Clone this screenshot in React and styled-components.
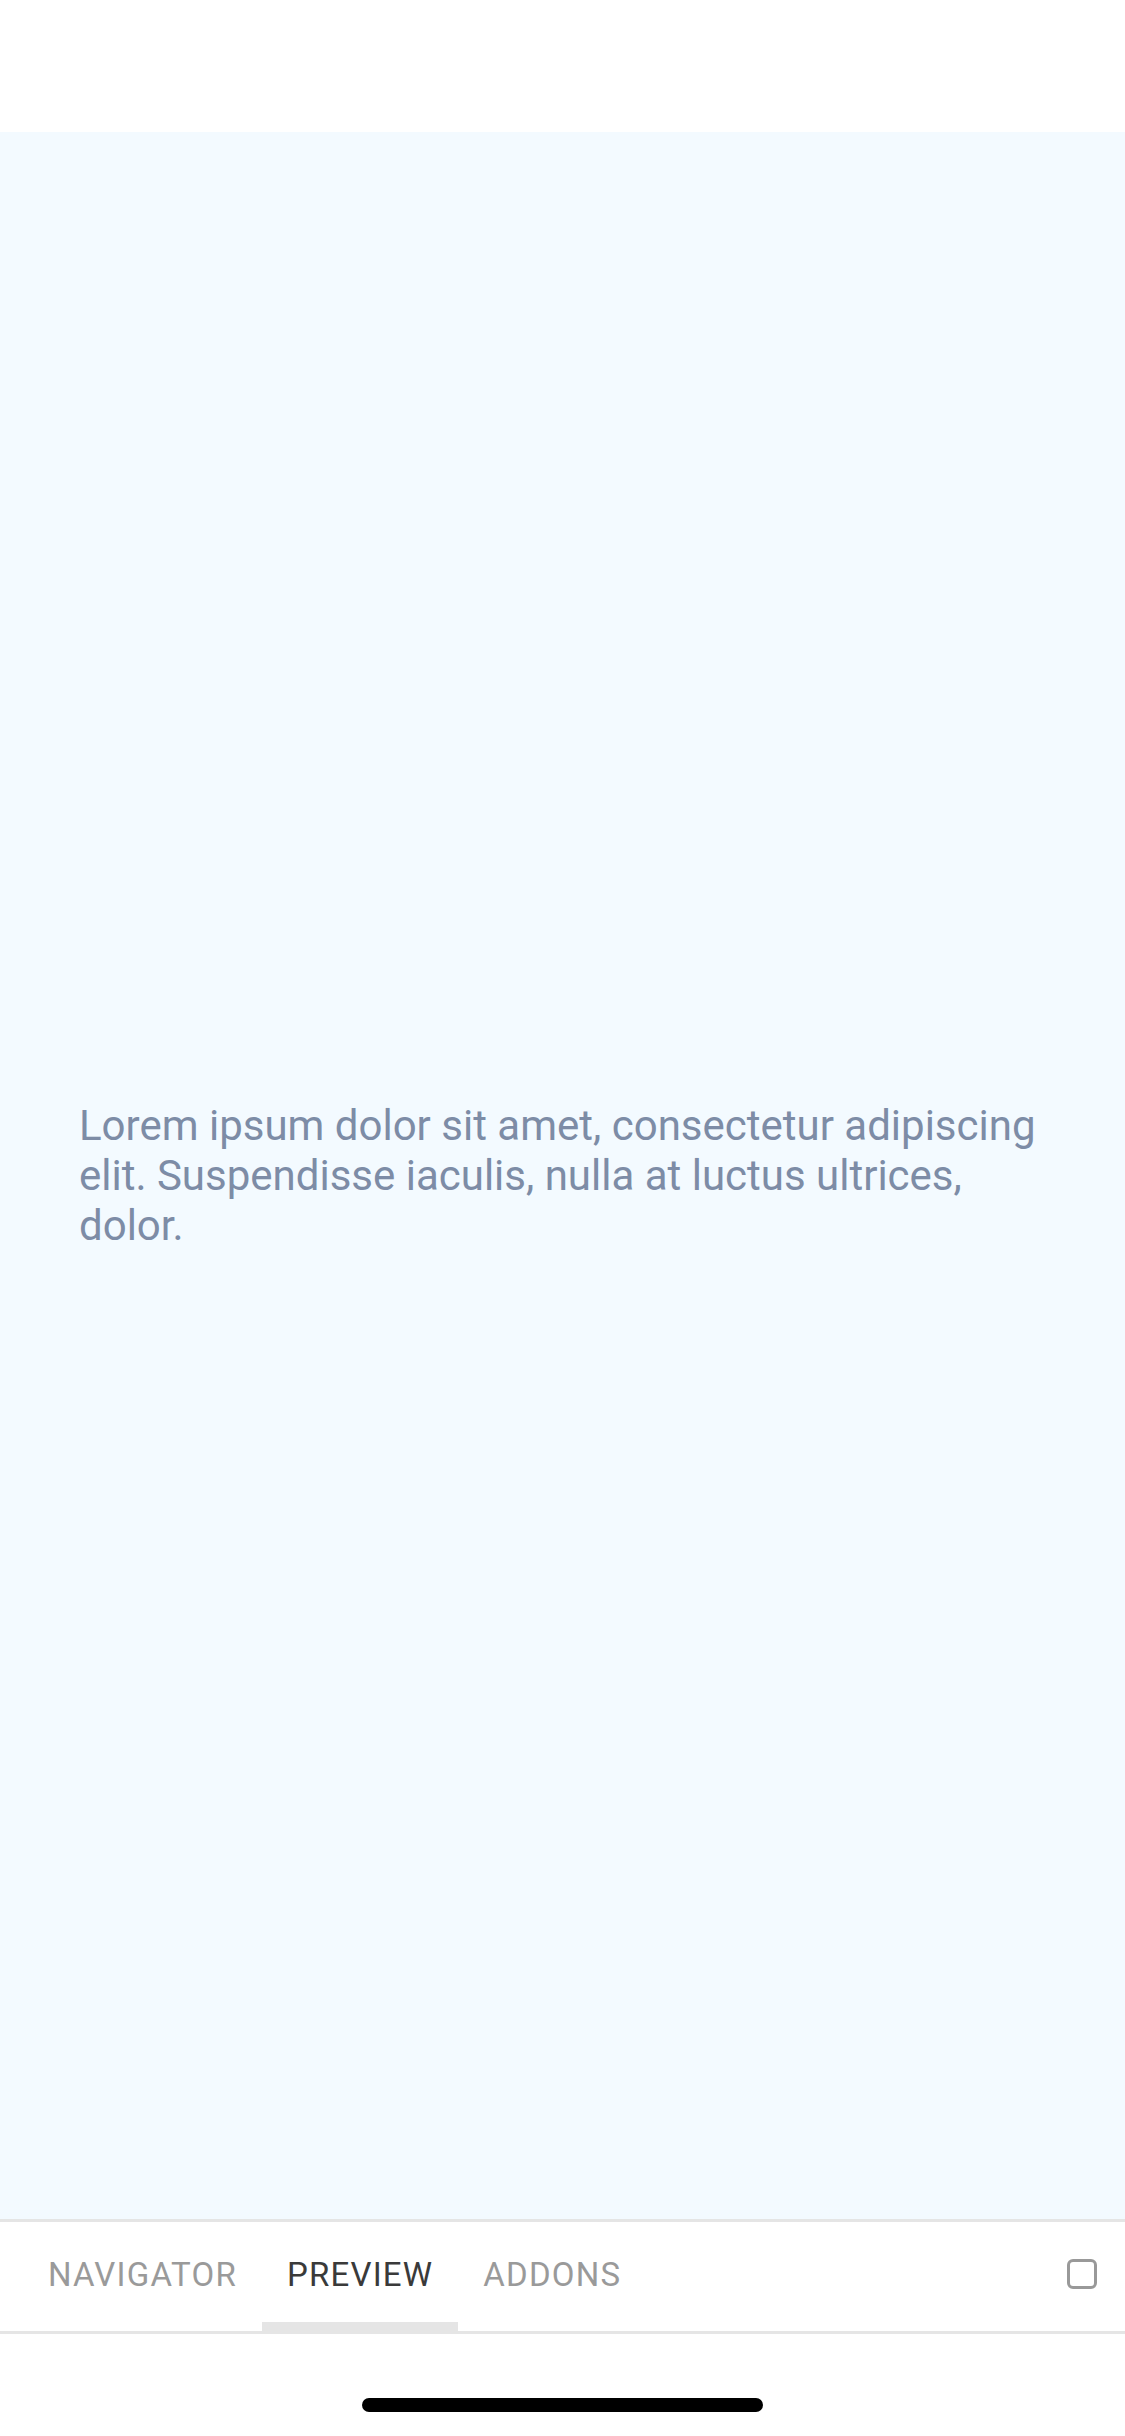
import React from "react";
import styled, { createGlobalStyle } from "styled-components";

const Global = createGlobalStyle`
  html, body { margin: 0; padding: 0; background: #ffffff; }
  body { font-family: Roboto, "Noto Sans", "Liberation Sans", sans-serif; }
  * { box-sizing: border-box; }
`;

const Screen = styled.div`
  width: 1125px;
  height: 2436px;
  display: flex;
  flex-direction: column;
  background: #ffffff;
`;

const StatusArea = styled.div`
  height: 132px;
  flex-shrink: 0;
  background: #ffffff;
`;

const Preview = styled.main`
  flex: 1;
  background: #f3faff;
  display: flex;
  flex-direction: column;
  justify-content: center;
  padding: 0 78px 0 79px;
`;

const Paragraph = styled.p`
  margin: 0;
  font-family: Roboto, "Noto Sans", sans-serif;
  font-size: 42px;
  line-height: 50px;
  color: #7d8ca6;
`;

const TabBar = styled.nav`
  flex-shrink: 0;
  height: 115px;
  border-top: 3px solid #e5e5e5;
  border-bottom: 3px solid #e5e5e5;
  background: #ffffff;
  display: flex;
  align-items: stretch;
  padding: 0 28px 0 23px;
`;

const Tab = styled.div`
  display: flex;
  align-items: center;
  justify-content: center;
  padding: 4px 25px 0;
  font-family: Roboto, "Noto Sans", sans-serif;
  font-size: 33px;
  letter-spacing: 1.2px;
  color: ${(p) => (p.$active ? "#3a3a3a" : "#9a9a9a")};
  border-bottom: 9px solid ${(p) => (p.$active ? "#e5e5e5" : "transparent")};
`;

const Spacer = styled.div`
  flex: 1;
`;

const ToggleBox = styled.div`
  align-self: center;
  width: 30px;
  height: 30px;
  border: 3px solid #999999;
  border-radius: 6px;
  margin-top: -6px;
`;

const HomeArea = styled.div`
  flex-shrink: 0;
  height: 102px;
  display: flex;
  justify-content: center;
  padding-top: 64px;
`;

const HomeIndicator = styled.div`
  width: 401px;
  height: 14px;
  border-radius: 7px;
  background: #000000;
`;

export default function App() {
  return (
    <>
      <Global />
      <Screen>
        <StatusArea />
        <Preview>
          <Paragraph>
            Lorem ipsum dolor sit amet, consectetur adipiscing elit. Suspendisse
            iaculis, nulla at luctus ultrices, dolor.
          </Paragraph>
        </Preview>
        <TabBar>
          <Tab>NAVIGATOR</Tab>
          <Tab $active>PREVIEW</Tab>
          <Tab>ADDONS</Tab>
          <Spacer />
          <ToggleBox />
        </TabBar>
        <HomeArea>
          <HomeIndicator />
        </HomeArea>
      </Screen>
    </>
  );
}
